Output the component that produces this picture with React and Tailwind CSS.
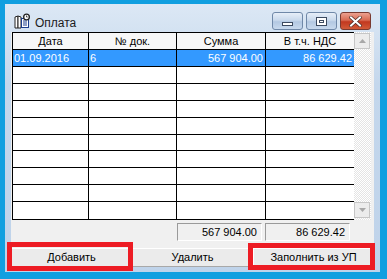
import React from 'react';

const rows = [
  { date: '01.09.2016', num: '6', sum: '567 904.00', vat: '86 629.42', selected: true },
  ...Array.from({ length: 9 }, () => ({ date: '', num: '', sum: '', vat: '' })),
];

const TitleIcon = () => (
  <svg width="17" height="16" viewBox="0 0 17 16">
    <path d="M1 4 L4 3 L4 15 L1 15 Z" fill="#fff" stroke="#222" strokeWidth="1" />
    <path d="M4 3 L7 4 L7 15 L4 15 Z" fill="#fff" stroke="#222" strokeWidth="1" />
    <rect x="7.5" y="5.5" width="7" height="9" fill="#fff" stroke="#1a3d8c" />
    <path d="M9 8h4M9 10h4M9 12h4" stroke="#1a3d8c" strokeWidth="1" />
    <circle cx="12.5" cy="4" r="3.5" fill="#222" />
    <circle cx="12.5" cy="4" r="2.2" fill="#fff" />
    <path d="M12.5 2.5v1.5h1.2" stroke="#222" strokeWidth="0.8" fill="none" />
  </svg>
);

const CaptionButton = ({ kind }) => {
  if (kind === 'close') {
    return (
      <div className="w-[31px] h-[18px] rounded-[3px] border border-[#7a3a30] bg-[linear-gradient(#eca190,#d86a52_45%,#c2381f_55%,#d25a38)] flex items-center justify-center">
        <svg width="13" height="11" viewBox="0 0 13 11">
          <path d="M2 1.5 L11 9.5 M11 1.5 L2 9.5" stroke="#4a2a25" strokeWidth="3.4" strokeLinecap="square" />
          <path d="M2 1.5 L11 9.5 M11 1.5 L2 9.5" stroke="#fff" strokeWidth="2" strokeLinecap="square" />
        </svg>
      </div>
    );
  }
  return (
    <div className="w-[31px] h-[18px] rounded-[3px] border border-[#6f88a8] bg-[linear-gradient(#e6eef8,#c9d9ec_45%,#b3c8e2_55%,#c8d9ed)] flex items-center justify-center">
      {kind === 'min' ? (
        <div className="mt-[5px] w-[11px] h-[4px] bg-white border border-[#3c4a60]" />
      ) : (
        <div className="w-[11px] h-[9px] bg-white border border-[#3c4a60] flex items-center justify-center">
          <div className="w-[5px] h-[3px] border border-[#3c4a60]" />
        </div>
      )}
    </div>
  );
};

const Cell = ({ w, align = 'left', children, last }) => (
  <div
    className={`h-full flex items-center ${last ? '' : 'border-r border-black'} ${align === 'right' ? 'justify-end pr-[2px]' : align === 'center' ? 'justify-center' : 'justify-start pl-[1px]'}`}
    style={{ width: w }}
  >
    {children}
  </div>
);

const cols = [76, 88, 89, 88];

export default function App() {
  return (
    <div className="relative w-[387px] h-[279px] overflow-hidden bg-[#119fe0] pt-[4px] pl-[5px] pr-[7px] pb-[7px] font-['Liberation_Sans',sans-serif] text-[11px] text-black">
      <div className="h-full flex flex-col bg-[linear-gradient(#dce8f5,#c4d7ec_30%,#bfd3ea)] px-[6px] pb-[5px]">
        {/* Title bar */}
        <div className="h-[28px] flex items-start">
          <div className="ml-[3px] mt-[9px]">
            <TitleIcon />
          </div>
          <span className="ml-[4px] mt-[10px] text-[12px] text-[#1b1b1b]">Оплата</span>
          <div className="ml-auto mr-[3px] mt-[8px] flex gap-[3px]">
            <CaptionButton kind="min" />
            <CaptionButton kind="max" />
            <CaptionButton kind="close" />
          </div>
        </div>

        {/* Client */}
        <div className="flex-1 bg-[#f0f0f0] flex flex-col">
          <div className="ml-[1px] w-[359px] h-[188px] flex">
            <div className="w-[342px] border-l border-t border-b border-black bg-white flex flex-col">
              <div className="h-[17px] border-b border-black bg-[#f7f7f7] flex">
                <Cell w={cols[0]} align="center">Дата</Cell>
                <Cell w={cols[1]} align="center">№ док.</Cell>
                <Cell w={cols[2]} align="center">Сумма</Cell>
                <Cell w={cols[3]} align="center" last>В т.ч. НДС</Cell>
              </div>
              {rows.map((r, i) => (
                <div
                  key={i}
                  className={`h-[17px] flex ${i < rows.length - 1 ? 'border-b border-black' : ''} ${r.selected ? 'bg-[#3399ff] text-white' : ''}`}
                >
                  <Cell w={cols[0]}>{r.date}</Cell>
                  <Cell w={cols[1]}>{r.num}</Cell>
                  <Cell w={cols[2]} align="right">{r.sum}</Cell>
                  <Cell w={cols[3]} align="right" last>{r.vat}</Cell>
                </div>
              ))}
            </div>

            {/* Scrollbar */}
            <div className="w-[17px] pt-[1px] pb-[2px] flex flex-col bg-[repeating-conic-gradient(#e4e4e4_0_25%,#ffffff_0_50%)] bg-[length:2px_2px]">
              <div className="w-[16px] h-[16px] border border-[#c6c6c6] bg-[#ececec] flex items-center justify-center">
                <svg width="7" height="4" viewBox="0 0 7 4">
                  <path d="M0 4 L3.5 0 L7 4 Z" fill="#a8a8a8" />
                </svg>
              </div>
              <div className="flex-1" />
              <div className="w-[16px] h-[16px] border border-[#c6c6c6] bg-[#ececec] flex items-center justify-center">
                <svg width="7" height="4" viewBox="0 0 7 4">
                  <path d="M0 0 L3.5 4 L7 0 Z" fill="#a8a8a8" />
                </svg>
              </div>
            </div>
          </div>

          {/* Totals */}
          <div className="mt-[3px] ml-[166px] flex gap-[3px]">
            <div className="w-[85px] h-[18px] border border-t-[#9a9a9a] border-l-[#9a9a9a] border-b-white border-r-white flex items-center justify-end pr-[4px]">
              567 904.00
            </div>
            <div className="w-[85px] h-[18px] border border-t-[#9a9a9a] border-l-[#9a9a9a] border-b-white border-r-white flex items-center justify-end pr-[4px]">
              86 629.42
            </div>
          </div>

          {/* Buttons */}
          <div className="mt-[7px] flex">
            {['Добавить', 'Удалить', 'Заполнить из УП'].map((t) => (
              <button
                key={t}
                className="w-[121px] h-[19px] bg-[#ebebeb] border border-t-white border-l-white border-b-[#a8a8a8] border-r-[#c8c8c8] flex items-center justify-center"
              >
                {t}
              </button>
            ))}
          </div>
        </div>
      </div>

      {/* Red highlight boxes */}
      <div className="absolute left-[7px] top-[242px] w-[126px] h-[29px] border-[5px] border-[#ed1c24]" />
      <div className="absolute left-[248px] top-[243px] w-[127px] h-[27px] border-[5px] border-[#ed1c24]" />
    </div>
  );
}
